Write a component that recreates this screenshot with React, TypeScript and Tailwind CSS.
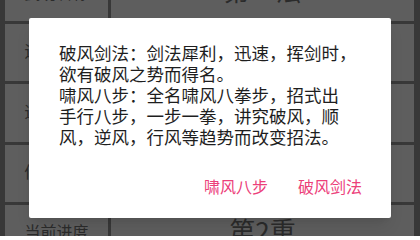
import React from 'react';

const rows = [
  { label: '武功名称', value: '第一法', h: 'h-[54px]' },
  { label: '运功要诀', value: '破风剑法', h: 'h-[57px]' },
  { label: '适用兵器', value: '长剑', h: 'h-[58px]' },
  { label: '修炼条件', value: '无', h: 'h-[57px]' },
  { label: '当前进度', value: '第2重', h: 'h-[57px]' },
];

const lines = [
  '破风剑法：剑法犀利，迅速，挥剑时，',
  '欲有破风之势而得名。',
  '啸风八步：全名啸风八拳步，招式出',
  '手行八步，一步一拳，讲究破风，顺',
  '风，逆风，行风等趋势而改变招法。',
];

export default function App() {
  const font = { fontFamily: '"Noto Sans CJK SC", "Noto Sans", sans-serif' };

  return (
    <div className="relative h-[236px] w-[420px] overflow-hidden bg-[#383838]" style={font}>
      {/* Skill table behind the dim */}
      <div className="-mt-[33px] flex flex-col gap-[3px] pl-[5px] pr-[6px]">
        {rows.map((row) => (
          <div key={row.label} className={`flex gap-[3px] ${row.h}`}>
            <div className="flex w-[103px] items-center justify-center bg-[#5e5e5e] pb-[5px] text-[16px] text-[#2b2b2b]">
              {row.label}
            </div>
            <div className="flex flex-1 items-center justify-center bg-[#5e5e5e] pb-[9px] text-[26px] text-[#2b2b2b]">
              {row.value}
            </div>
          </div>
        ))}
      </div>

      {/* Dialog */}
      <div className="absolute left-[29px] top-[18px] w-[362px] rounded-[2px] bg-white pb-[22px] pl-[30px] pr-[29px] pt-[24px] shadow-lg">
        <div className="text-[17.5px] leading-[21px] text-[#1e1e1e] whitespace-nowrap">
          {lines.map((line) => (
            <div key={line}>{line}</div>
          ))}
        </div>
        <div className="mt-[29px] flex justify-end gap-[30px] text-[16px] leading-[20px] text-[#ec407a]">
          <button>啸风八步</button>
          <button>破风剑法</button>
        </div>
      </div>
    </div>
  );
}
